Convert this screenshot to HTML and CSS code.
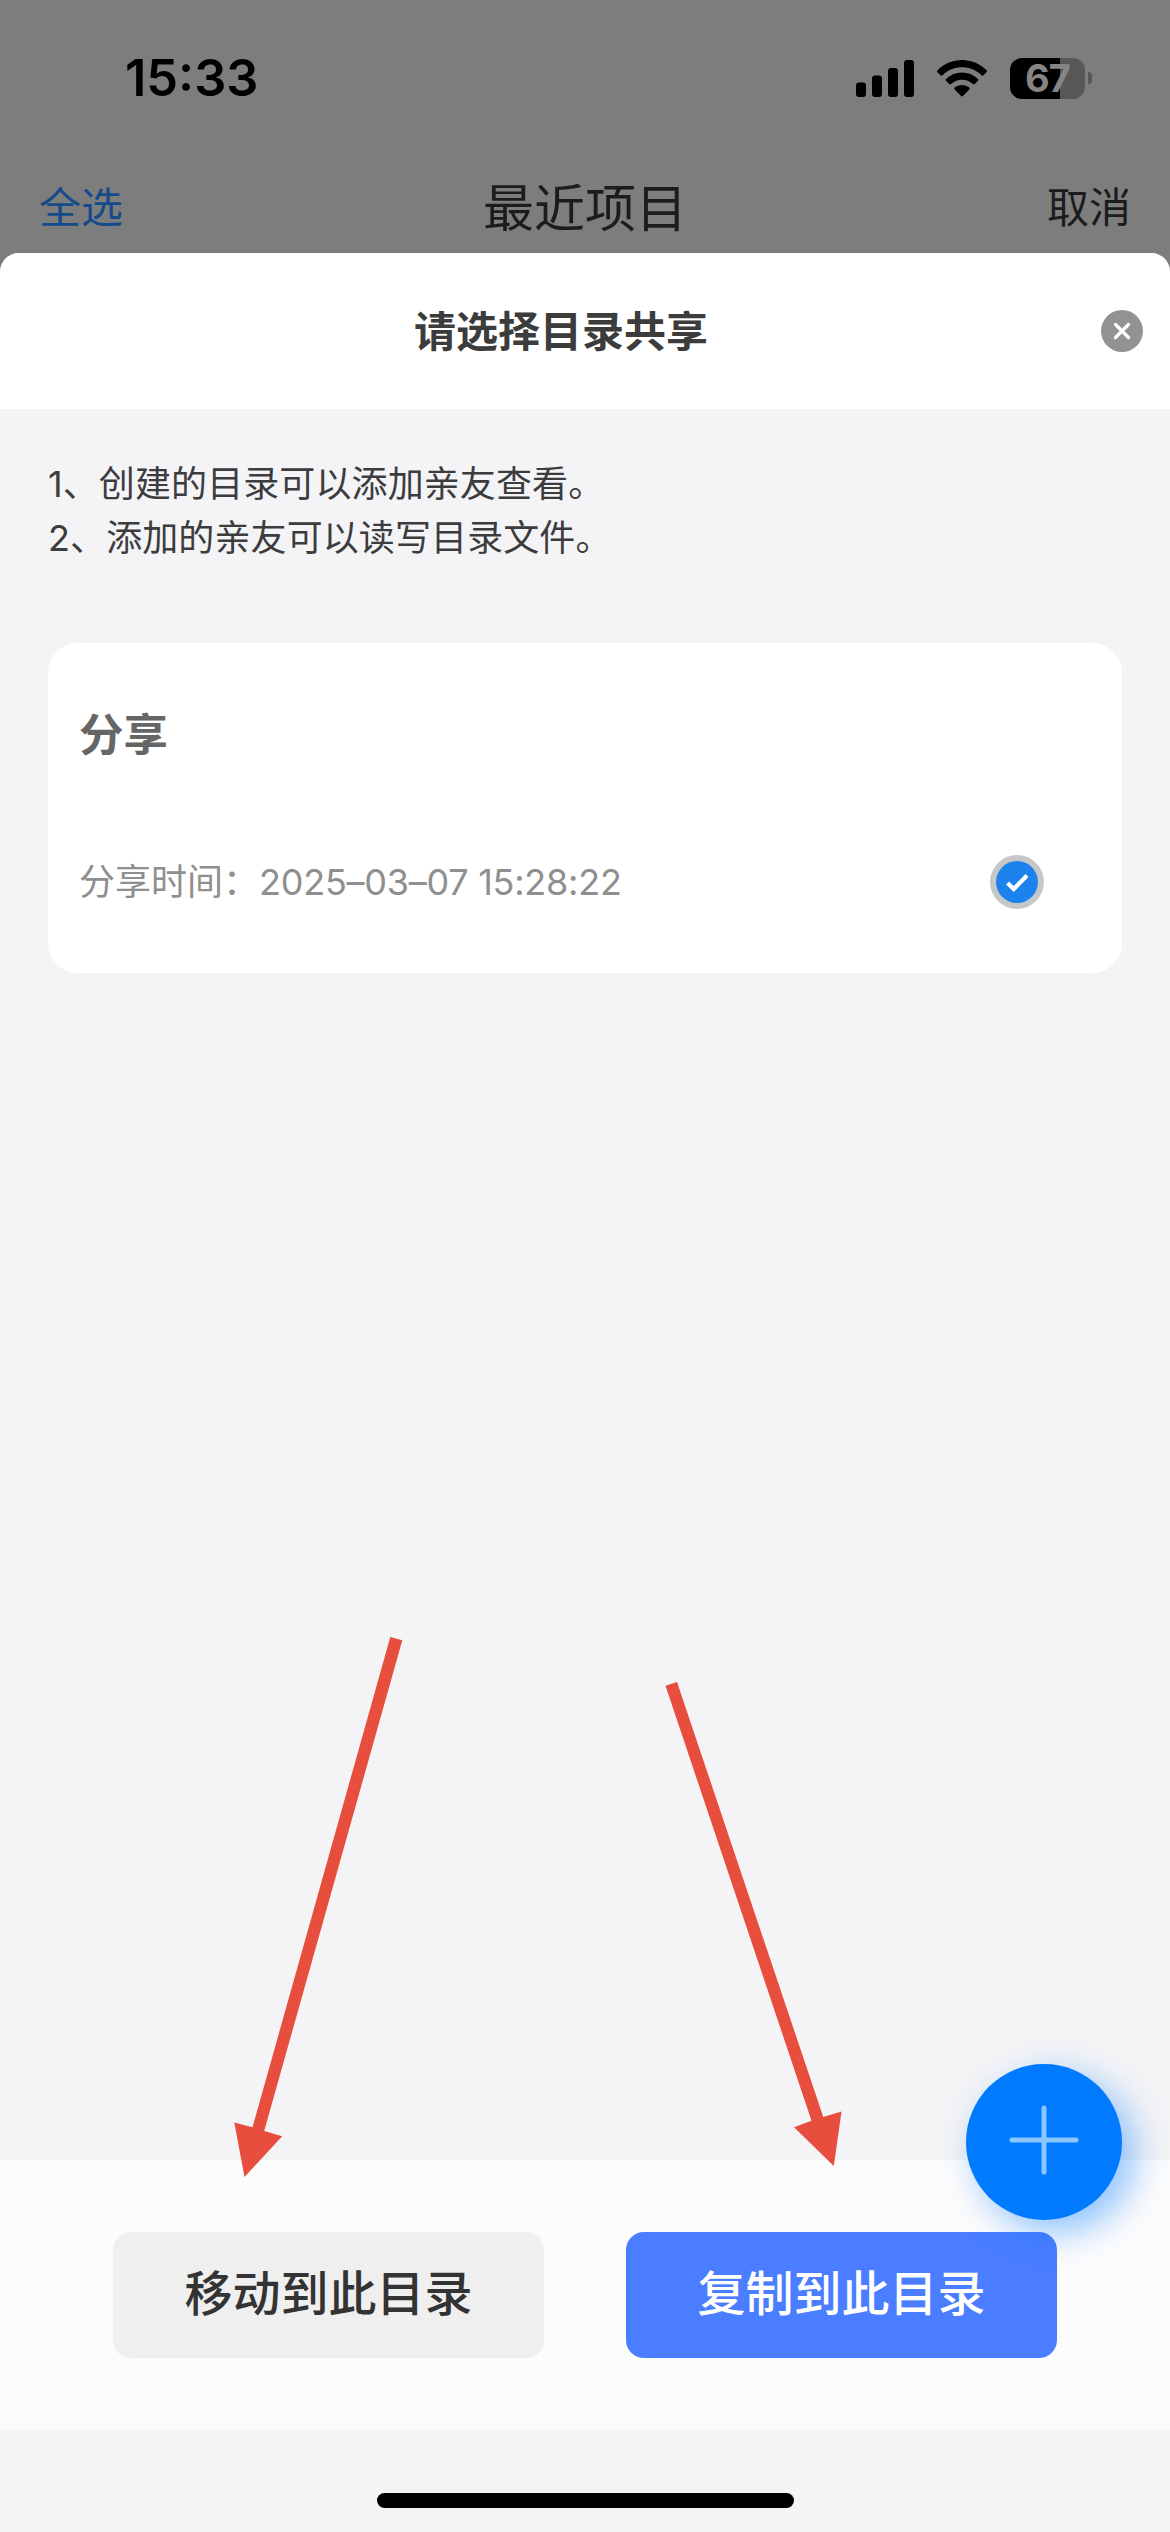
FILE: index.html
```html
<!DOCTYPE html>
<html lang="zh-CN">
<head>
<meta charset="utf-8">
<title>请选择目录共享</title>
<link rel="stylesheet" href="styles.css">
</head>
<body>
<div class="screen">
  <div class="status-bar">
    <span class="clock">15:33</span>
    <div class="status-icons">
      <svg class="signal" width="58" height="38" viewBox="0 0 58 38"><rect x="0" y="23.5" width="10" height="14.5" rx="3"/><rect x="16" y="16.5" width="10" height="21.5" rx="3"/><rect x="32" y="9" width="10" height="29" rx="3"/><rect x="48" y="1" width="10" height="37" rx="3"/></svg>
      <svg class="wifi" width="50" height="38" viewBox="0 0 50 38"><path d="M.5 11.2C14-2.4 36-2.4 49.500 11.200c.6.6.6 1.400 0 2l-3 3c-.6.6-1.400.6-2 0C33.700 5.600 16.300 5.600 5.500 16.200c-.6.6-1.400.6-2 0l-3-3c-.6-.6-.6-1.400 0-2Z"/><path d="M9 19.900c9-8.600 23-8.600 32 0 .6.6.6 1.300 0 1.900l-3.200 3.200c-.6.6-1.300.6-1.900 0-6.200-5.700-15.600-5.700-21.800 0-.6.6-1.300.6-1.900 0L9 21.800c-.6-.6-.6-1.300 0-1.900Z"/><path d="M17.700 28.600c4.200-3.600 10.400-3.600 14.600 0 .6.5.6 1.200 0 1.800l-6.400 6.700c-.5.5-1.300.5-1.800 0l-6.400-6.700c-.6-.6-.6-1.300 0-1.800Z"/></svg>
      <div class="battery"><span class="battery-body">67</span><span class="battery-cap"></span></div>
    </div>
  </div>
  <div class="nav-bar">
    <span class="nav-all">全选</span>
    <span class="nav-title">最近项目</span>
    <span class="nav-cancel">取消</span>
  </div>
  <div class="sheet">
    <div class="sheet-header">
      <h1 class="sheet-title">请选择目录共享</h1>
      <svg class="close" width="42" height="42" viewBox="0 0 42 42"><circle cx="21" cy="21" r="21" fill="#929292"/><path d="M14.500 14.500l13 13m0-13l-13 13" stroke="#fff" stroke-width="3.200" stroke-linecap="round"/></svg>
    </div>
    <div class="sheet-body">
      <div class="tips">
        <p>1、创建的目录可以添加亲友查看。</p>
        <p>2、添加的亲友可以读写目录文件。</p>
      </div>
      <div class="card">
        <h2 class="card-title">分享</h2>
        <div class="card-row">
          <span class="card-time">分享时间：<span class="stamp">2025–03–07 15:28:22</span></span>
          <svg width="54" height="54" viewBox="0 0 54 54"><circle cx="27" cy="27" r="27" fill="#c5c7c9"/><circle cx="27" cy="27" r="21" fill="#1c82ee"/><path d="M17.500 28l6.200 6L37 20.500" fill="none" stroke="#fff" stroke-width="4.200"/></svg>
        </div>
      </div>
    </div>
    <div class="actions">
      <div class="btn btn-move">移动到此目录</div>
      <div class="btn btn-copy">复制到此目录</div>
    </div>
    <div class="home-area"><div class="home-indicator"></div></div>
  </div>
  <div class="fab"><svg width="70" height="70" viewBox="0 0 70 70"><path d="M3 35h64M35 3v64" stroke="#8cc6ff" stroke-width="5" stroke-linecap="round"/></svg></div>
  <svg class="arrows" width="1170" height="2532" viewBox="0 0 1170 2532" fill="#e84e3d">
    <path d="M390.300 1637l12 3.200L264.200 2131l18 5.200L244.500 2177l-10.200-54.600 18.200 4.900Z"/>
    <path d="M665.500 1685.800l11.500-3.800 146.300 435 18.200-5.500L833.800 2166 794 2127.200l17.500-6.500Z"/>
  </svg>
</div>
</body>
</html>
```
FILE: styles.css
```css
* { box-sizing: border-box; }
body, h1, h2, p { margin: 0; }
body { font-family: Inter, "Noto Sans CJK SC", sans-serif; }
.screen {
  position: relative;
  display: flex;
  flex-direction: column;
  width: 1170px;
  height: 2532px;
  overflow: hidden;
  background: #7d7d7d;
}
.status-bar {
  display: flex;
  justify-content: space-between;
  align-items: center;
  height: 156px;
  padding: 0 78px 0 125px;
}
.clock { font-size: 50.500px; font-weight: 600; line-height: 60px; color: #000; }
.status-icons { display: flex; align-items: center; }
.wifi { margin: 0 23px; }
.battery { display: flex; align-items: center; gap: 3px; }
.battery-body {
  width: 75px;
  height: 41px;
  border-radius: 12px;
  background: linear-gradient(90deg, #000 50px, #575757 50px);
  color: #858585;
  font-size: 38px;
  font-weight: 700;
  line-height: 41px;
  text-align: center;
  letter-spacing: -1px;
}
.battery-cap { width: 4px; height: 12px; border-radius: 0 6px 6px 0; background: #575757; }
.nav-bar {
  display: grid;
  grid-template-columns: 1fr auto 1fr;
  align-items: center;
  height: 97px;
  padding: 6px 39px 0;
  line-height: 60px;
  color: #1c1c1c;
}
.nav-all { font-size: 42px; color: #154b8b; }
.nav-title { padding-top: 3px; font-size: 51px; }
.nav-cancel { font-size: 42px; text-align: right; }
.sheet {
  display: flex;
  flex: 1;
  flex-direction: column;
  overflow: hidden;
  border-radius: 19px 19px 0 0;
  background: #f4f4f6;
}
.sheet-header {
  display: flex;
  align-items: center;
  height: 156px;
  padding: 0 27px 0 21px;
  background: #fff;
}
.sheet-title {
  flex: 1;
  padding-top: 2px;
  color: #3c3c3c;
  font-size: 42px;
  font-weight: 700;
  line-height: 60px;
  text-align: center;
}
.sheet-body { flex: 1; padding: 48px 48px 0; }
.tips { color: #3c3c3f; font-size: 36px; line-height: 54px; letter-spacing: 0.1px; }
.card {
  height: 330px;
  margin-top: 78px;
  padding: 60px 78px 0 31px;
  border-radius: 30px;
  background: #fff;
}
.card-title { color: #666; font-size: 44.500px; font-weight: 700; line-height: 64px; }
.card-row {
  display: flex;
  align-items: center;
  justify-content: space-between;
  margin-top: 88px;
  height: 54px;
}
.card-time { color: #8f8f8f; font-size: 36px; line-height: 54px; }
.stamp { letter-spacing: -0.25px; }
.actions {
  display: flex;
  gap: 82px;
  height: 270px;
  padding: 72px 113px 0;
  background: #fcfcfc;
}
.btn {
  flex: 1;
  height: 126px;
  border-radius: 18px;
  font-size: 48px;
  font-weight: 500;
  line-height: 123px;
  text-align: center;
}
.btn-move { background: #efefef; color: #333; }
.btn-copy { background: #4a7dff; color: #fff; }
.home-area { height: 102px; padding-top: 63px; }
.home-indicator { width: 417px; height: 15px; margin: 0 auto; border-radius: 8px; background: #000; }
.fab {
  position: absolute;
  left: 966px;
  top: 2064px;
  display: flex;
  align-items: center;
  justify-content: center;
  width: 156px;
  height: 156px;
  padding-bottom: 4px;
  border-radius: 50%;
  background: #007aff;
  box-shadow: 12px 12px 36px rgba(0, 122, 255, 0.45);
}
.arrows { position: absolute; left: 0; top: 0; pointer-events: none; }
```
